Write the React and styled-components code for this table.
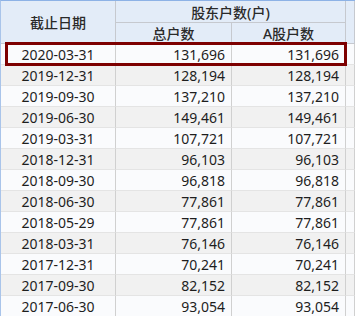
import React from "react";
import styled, { createGlobalStyle } from "styled-components";

const GlobalStyle = createGlobalStyle`
  body {
    margin: 0;
    background: #ffffff;
    overflow: hidden;
    font-family: "Noto Sans", "Noto Sans CJK SC", sans-serif;
  }
`;

const COLS = "115px 116px 114px 1fr";

const Table = styled.div`
  position: relative;
  box-sizing: border-box;
  width: 100%;
  border-top: 1px solid #8db2e6;
  border-left: 1px solid #a9c4ea;
  color: #1e1e1e;
  font-size: 14px;
`;

const Header = styled.div`
  display: grid;
  grid-template-columns: ${COLS};
  grid-template-rows: 22px 21px;
  background: #e3ecf8;
  color: #2a2a2a;
`;

const HeadCell = styled.div`
  box-sizing: border-box;
  display: flex;
  align-items: center;
  justify-content: center;
  border-right: 1px solid #c6c9cf;
  border-bottom: 1px solid #c6c9cf;
  font-weight: 500;
  grid-column: ${({ $col }) => $col || "auto"};
  grid-row: ${({ $row }) => $row || "auto"};
`;

const Row = styled.div`
  display: grid;
  grid-template-columns: ${COLS};
  height: 21px;
  background: ${({ $alt }) => ($alt ? "#f1f1f1" : "#fafbfd")};
`;

const Cell = styled.div`
  box-sizing: border-box;
  display: flex;
  align-items: center;
  justify-content: ${({ $align }) => ($align === "right" ? "flex-end" : "center")};
  padding-right: ${({ $align }) => ($align === "right" ? "6px" : "0")};
  border-right: 1px solid #d0d0d0;
  border-bottom: 1px solid #e4e4e4;
  white-space: nowrap;
`;

const Highlight = styled.div`
  position: absolute;
  left: 4px;
  top: 41px;
  width: 342px;
  height: 24px;
  box-sizing: border-box;
  border: 3px solid #7d0000;
  pointer-events: none;
`;

const rows = [
  ["2020-03-31", "131,696", "131,696"],
  ["2019-12-31", "128,194", "128,194"],
  ["2019-09-30", "137,210", "137,210"],
  ["2019-06-30", "149,461", "149,461"],
  ["2019-03-31", "107,721", "107,721"],
  ["2018-12-31", "96,103", "96,103"],
  ["2018-09-30", "96,818", "96,818"],
  ["2018-06-30", "77,861", "77,861"],
  ["2018-05-29", "77,861", "77,861"],
  ["2018-03-31", "76,146", "76,146"],
  ["2017-12-31", "70,241", "70,241"],
  ["2017-09-30", "82,152", "82,152"],
  ["2017-06-30", "93,054", "93,054"],
];

export default function App() {
  return (
    <>
      <GlobalStyle />
      <Table>
        <Header>
          <HeadCell $col="1" $row="1 / span 2">截止日期</HeadCell>
          <HeadCell $col="2 / span 2" $row="1">股东户数(户)</HeadCell>
          <HeadCell $col="4" $row="1 / span 2" />
          <HeadCell $col="2" $row="2">总户数</HeadCell>
          <HeadCell $col="3" $row="2">A股户数</HeadCell>
        </Header>
        {rows.map(([date, total, a], i) => (
          <Row key={date} $alt={i % 2 === 1}>
            <Cell>{date}</Cell>
            <Cell $align="right">{total}</Cell>
            <Cell $align="right">{a}</Cell>
            <Cell />
          </Row>
        ))}
        <Highlight />
      </Table>
    </>
  );
}
